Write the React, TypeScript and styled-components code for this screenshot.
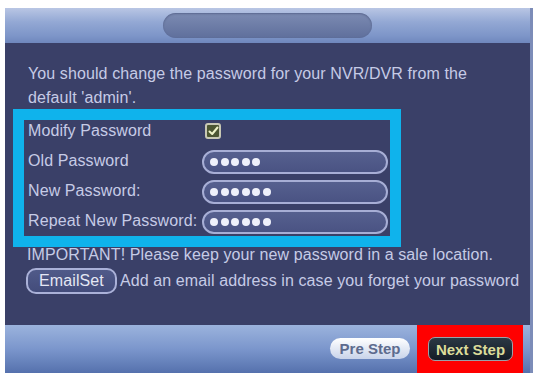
import React from "react";
import styled, { createGlobalStyle } from "styled-components";

const Global = createGlobalStyle`
  html, body { margin: 0; padding: 0; background: #ffffff; }
  body { font-family: "Liberation Sans", Arial, sans-serif; }
`;

const Page = styled.div`
  width: 540px;
  height: 376px;
  padding: 8px 7px 3px 5px;
  box-sizing: border-box;
  background: #ffffff;
`;

const Window = styled.div`
  width: 528px;
  height: 365px;
  display: flex;
  flex-direction: column;
  background: #3a4068;
  border-right: 3px solid #7c8cb8;
  box-sizing: border-box;
  overflow: hidden;
`;

const TitleBar = styled.div`
  height: 35px;
  flex: none;
  display: flex;
  justify-content: center;
  align-items: flex-start;
  padding-top: 5px;
  box-sizing: border-box;
  background: linear-gradient(#b9c6e4 0%, #93a8d4 40%, #7d95c8 80%, #6f87bd 100%);
`;

const TitlePill = styled.div`
  width: 209px;
  height: 25px;
  border-radius: 13px;
  background: linear-gradient(#7c8bb2, #5f6f9c);
  box-shadow: inset 0 1px 2px rgba(40, 50, 90, 0.4);
`;

const Content = styled.div`
  flex: 1;
  display: flex;
  flex-direction: column;
  padding: 19px 0 0 8px;
  color: #c6cbe6;
  font-size: 16px;
  letter-spacing: 0.1px;
`;

const Line = styled.div<{ $indent?: number; $h?: number }>`
  height: ${(p) => p.$h ?? 24}px;
  line-height: ${(p) => p.$h ?? 24}px;
  padding-left: ${(p) => p.$indent ?? 15}px;
  white-space: nowrap;
`;

const Highlight = styled.div`
  width: 388px;
  height: 138px;
  margin-top: -1px;
  border: 11px solid #0fb3ec;
  box-sizing: border-box;
  display: flex;
  flex-direction: column;
  gap: 6px;
  padding-left: 4px;
`;

const Row = styled.div`
  height: 24px;
  display: flex;
  align-items: center;
`;

const Label = styled.div`
  width: 174px;
  flex: none;
  white-space: nowrap;
  margin-top: -3px;
`;

const Check = styled.div`
  width: 16px;
  height: 16px;
  margin-left: 3px;
  margin-top: -2px;
  box-sizing: border-box;
  border: 2px solid #c8c8b4;
  border-radius: 3px;
  background: #4c5632;
  display: flex;
  align-items: center;
  justify-content: center;
`;

const Field = styled.div`
  width: 186px;
  height: 24px;
  box-sizing: border-box;
  border: 2px solid #a7aed5;
  border-radius: 12px;
  background: linear-gradient(#56608f, #4a5383);
  display: flex;
  align-items: center;
  gap: 2.5px;
  padding-left: 6px;
`;

const Dot = styled.span`
  width: 8px;
  height: 8px;
  border-radius: 50%;
  background: #eef0fa;
`;

const EmailRow = styled.div`
  display: flex;
  align-items: center;
  margin-top: 5px;
  padding-left: 13px;
  gap: 3px;
  white-space: nowrap;
`;

const EmailButton = styled.div`
  width: 91px;
  height: 26px;
  box-sizing: border-box;
  border: 2px solid #aab1d8;
  border-radius: 10px;
  background: linear-gradient(#505a89, #434c7b);
  color: #e4e7f4;
  font-size: 16px;
  display: flex;
  align-items: center;
  justify-content: center;
`;

const Footer = styled.div`
  height: 48px;
  flex: none;
  display: flex;
  justify-content: flex-end;
  align-items: stretch;
  gap: 7px;
  padding-right: 7px;
  background: linear-gradient(#9bb3dd 0%, #7b96cc 50%, #5571ad 100%);
`;

const PreButton = styled.button`
  align-self: center;
  margin-top: -1px;
  width: 80px;
  height: 21px;
  border: none;
  border-radius: 11px;
  background: linear-gradient(#ffffff, #c8d3ea);
  color: #5d6b8e;
  font-family: "Liberation Sans", Arial, sans-serif;
  font-size: 15px;
  font-weight: bold;
  padding: 0;
`;

const RedFrame = styled.div`
  width: 106px;
  background: #ff0000;
  display: flex;
  align-items: center;
  padding-left: 11px;
  box-sizing: border-box;
`;

const NextButton = styled.button`
  width: 85px;
  height: 24px;
  border: 1px solid #9aa1a8;
  border-radius: 7px;
  background: linear-gradient(#2b3844, #141c26);
  color: #dcdc9a;
  font-family: "Liberation Sans", Arial, sans-serif;
  font-size: 15px;
  font-weight: bold;
  padding: 0;
`;

const CheckIcon = () => (
  <svg width="11" height="10" viewBox="0 0 11 10">
    <path d="M1.5 5.5 L4.2 8 L9.5 1.5" fill="none" stroke="#eef3c8" strokeWidth="2" strokeLinecap="round" strokeLinejoin="round" />
  </svg>
);

const Dots = ({ n }: { n: number }) => (
  <>
    {Array.from({ length: n }).map((_, i) => (
      <Dot key={i} />
    ))}
  </>
);

export default function App() {
  return (
    <>
      <Global />
      <Page>
        <Window>
          <TitleBar>
            <TitlePill />
          </TitleBar>
          <Content>
            <Line>You should change the password for your NVR/DVR from the</Line>
            <Line>default 'admin'.</Line>
            <Highlight>
              <Row>
                <Label>Modify Password</Label>
                <Check>
                  <CheckIcon />
                </Check>
              </Row>
              <Row>
                <Label>Old Password</Label>
                <Field>
                  <Dots n={5} />
                </Field>
              </Row>
              <Row>
                <Label>New Password:</Label>
                <Field>
                  <Dots n={6} />
                </Field>
              </Row>
              <Row>
                <Label>Repeat New Password:</Label>
                <Field>
                  <Dots n={6} />
                </Field>
              </Row>
            </Highlight>
            <Line $indent={14} $h={16}>IMPORTANT! Please keep your new password in a sale location.</Line>
            <EmailRow>
              <EmailButton>EmailSet</EmailButton>
              <span>Add an email address in case you forget your password</span>
            </EmailRow>
          </Content>
          <Footer>
            <PreButton>Pre Step</PreButton>
            <RedFrame>
              <NextButton>Next Step</NextButton>
            </RedFrame>
          </Footer>
        </Window>
      </Page>
    </>
  );
}
